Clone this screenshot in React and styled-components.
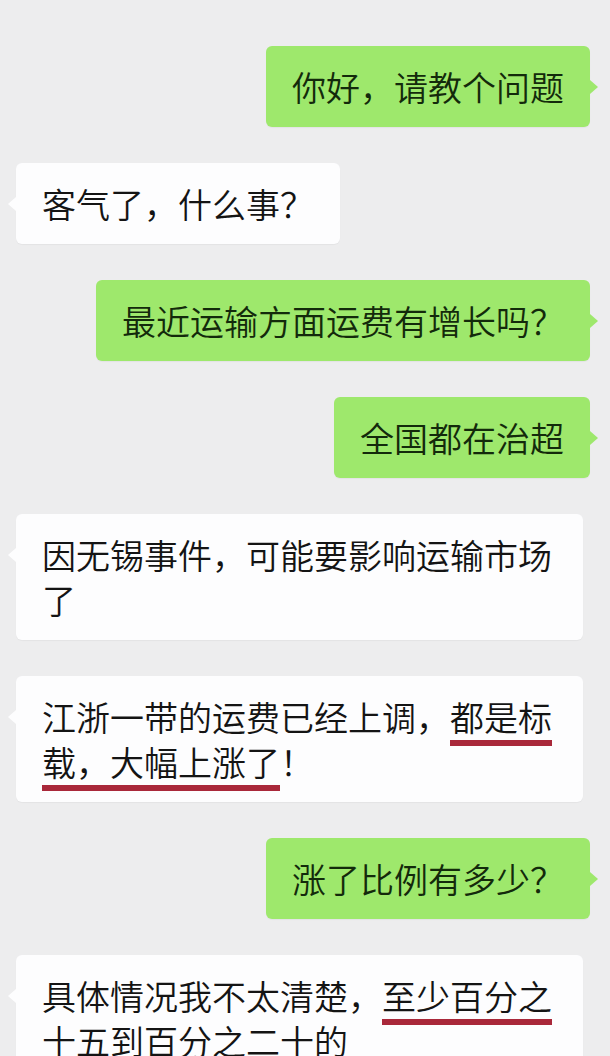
import React from "react";
import styled, { createGlobalStyle } from "styled-components";

const GlobalStyle = createGlobalStyle`
  html, body {
    margin: 0;
    padding: 0;
    background: #ededee;
    overflow: hidden;
  }
  body {
    font-family: "Noto Sans CJK SC", "Noto Sans", sans-serif;
  }
`;

const Chat = styled.main`
  display: flex;
  flex-direction: column;
  gap: 36px;
  padding: 46px 20px 0 16px;
  width: 610px;
  box-sizing: border-box;
`;

const Row = styled.div`
  display: flex;
  justify-content: ${(p) => (p.$mine ? "flex-end" : "flex-start")};
`;

const Bubble = styled.div`
  position: relative;
  box-sizing: border-box;
  max-width: 567px;
  padding: 18px 26px;
  border-radius: 6px;
  font-size: 34px;
  font-weight: 350;
  line-height: 45px;
  background: ${(p) => (p.$mine ? "#9ee86c" : "#fdfdfe")};
  color: ${(p) => (p.$mine ? "#132a0b" : "#141414")};
  box-shadow: 0 1px 1px rgba(0, 0, 0, 0.04);

  &::after {
    content: "";
    position: absolute;
    top: 34px;
    ${(p) => (p.$mine ? "right: -8px;" : "left: -8px;")}
    width: 0;
    height: 0;
    border-top: 7px solid transparent;
    border-bottom: 7px solid transparent;
    ${(p) =>
      p.$mine
        ? "border-left: 8px solid #9ee86c;"
        : "border-right: 8px solid #fdfdfe;"}
  }
`;

const Mark = styled.span`
  text-decoration: underline;
  text-decoration-color: #a9283a;
  text-decoration-thickness: 6px;
  text-underline-offset: 9px;
  text-decoration-skip-ink: none;
`;

const messages = [
  { mine: true, text: "你好，请教个问题" },
  { mine: false, text: "客气了，什么事？" },
  { mine: true, text: "最近运输方面运费有增长吗？" },
  { mine: true, text: "全国都在治超" },
  { mine: false, text: "因无锡事件，可能要影响运输市场了" },
  {
    mine: false,
    text: (
      <>
        江浙一带的运费已经上调，<Mark>都是标</Mark>
        <Mark>载，大幅上涨了</Mark>！
      </>
    )
  },
  { mine: true, text: "涨了比例有多少？" },
  {
    mine: false,
    text: (
      <>
        具体情况我不太清楚，<Mark>至少百分之</Mark>十五到百分之二十的
      </>
    )
  }
];

export default function App() {
  return (
    <>
      <GlobalStyle />
      <Chat>
        {messages.map((m, i) => (
          <Row key={i} $mine={m.mine}>
            <Bubble $mine={m.mine}>{m.text}</Bubble>
          </Row>
        ))}
      </Chat>
    </>
  );
}
